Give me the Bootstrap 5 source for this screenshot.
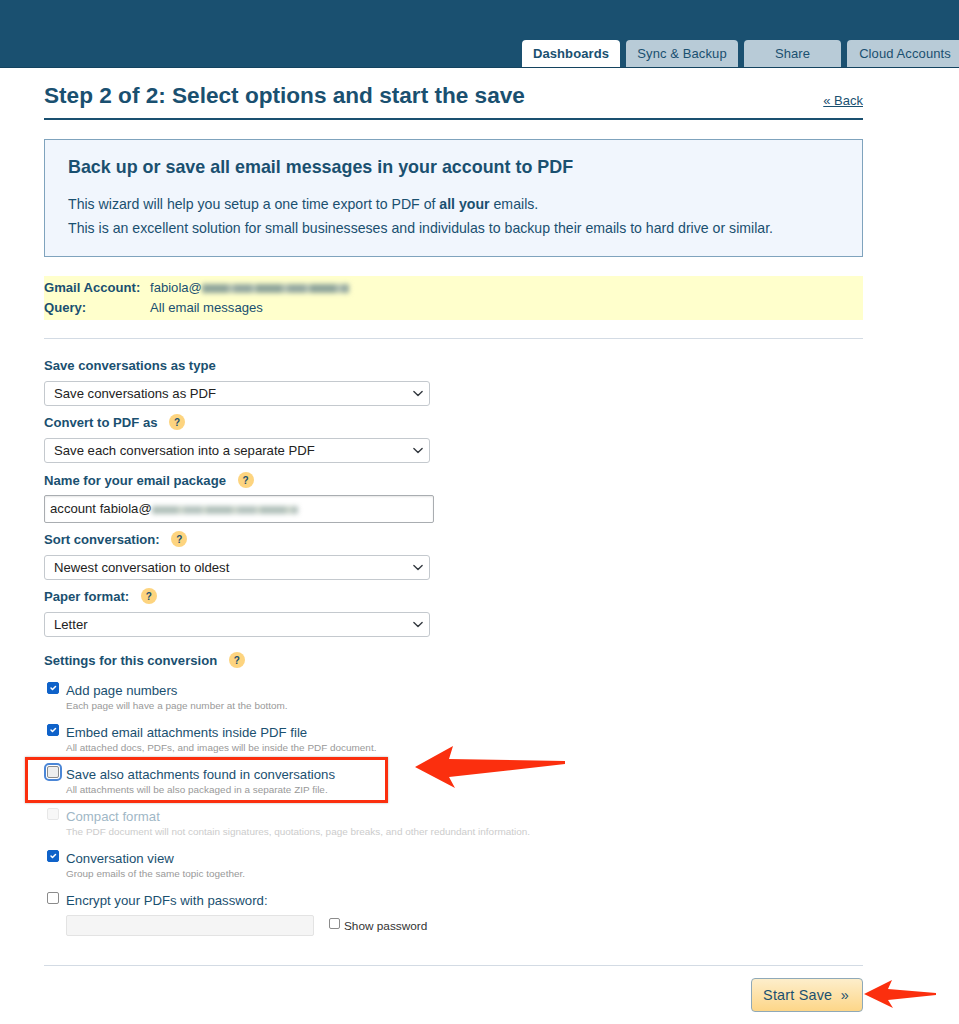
<!DOCTYPE html>
<html lang="en">
<head>
<meta charset="utf-8">
<title>Step 2 of 2</title>
<link href="https://cdn.jsdelivr.net/npm/bootstrap@5.3.0/dist/css/bootstrap.min.css" rel="stylesheet">
<style>
:root{--ink:#1a5070}
html,body{height:1024px;overflow:hidden}
body{position:relative;font-family:"Liberation Sans",Arial,sans-serif;font-size:13.1px;color:var(--ink);background:#fff;line-height:1.2}
.topband{height:68px;background:var(--ink);padding:40px 0 0 522px;gap:6px;overflow:hidden;border-bottom:1px solid #14435f}
.tabx{height:28px;background:#b8cbd7;border-radius:4px 4px 0 0;border-bottom:1px solid #8fabbd;font-size:13px;line-height:27px;text-align:center;color:var(--ink);flex:none;letter-spacing:.1px}
.tabx.on{background:#fff;border-bottom:0;font-weight:700;height:29px}
.pagewrap{width:819px;margin-left:44px}
.headrow{height:52px;border-bottom:2px solid var(--ink)}
.headrow h1{font-size:22.6px;font-weight:700;margin:0;padding-top:15px;color:var(--ink);line-height:26px}
.backlink{font-size:13px;color:var(--ink);padding-top:25px}
.introbox{margin-top:19px;height:118px;background:#f1f6fd;border:1px solid #7fa3bd;padding:16px 23px 0}
.introbox h2{font-size:17.9px;font-weight:700;margin:0 0 18px;line-height:22px;color:var(--ink)}
.introbox p{font-size:14.14px;margin:0 0 8px;line-height:16px}
.yellowbar{margin-top:19px;height:44px;background:#ffc;padding-top:4px}
.yellowbar .kvrow{height:20px;line-height:15px}
.yellowbar .keyb{width:106px;font-weight:700;flex:none}
.blurred{display:inline-block;height:9px;vertical-align:-1px;filter:blur(2.4px);background:repeating-linear-gradient(90deg,#8ea49b 0 26px,#b4c2b4 26px 32px,#94a8a1 32px 50px,#bcc9ba 50px 54px)}
.softrule{border:0;border-top:1px solid #d3dbe4;margin:0;opacity:1}
.fieldlab{font-weight:700;display:block;line-height:15px;margin:0}
.helpdot{display:inline-flex;width:16px;height:16px;border-radius:50%;background:#fdd47f;color:#1a5070;font-size:10px;font-weight:700;align-items:center;justify-content:center;margin-left:8px;vertical-align:1px}
.selx.form-select{width:386px;height:25px;padding:0 24px 0 9px;font-size:13.15px;line-height:23px;color:#222;border:1px solid #c4c9ce;border-radius:3px;background-position:right 4px center;background-size:14px 11px;margin-top:8px}
.inpx{width:390px;height:28px;margin-top:7px;border:1px solid #a9adb1;border-radius:2px;padding:0 5px;font-size:13.15px;line-height:26px;color:#222;box-shadow:inset 0 1px 2px rgba(0,0,0,.1)}
.chkrow{display:flex;height:42px}
.chkrow .form-check-input{width:12px;height:12px;margin:-1px 7px 0 3px;flex:none;border:1px solid #8b8b8b;border-radius:2px}
.chkrow .form-check-input:checked{background-color:#0f62c9;border-color:#0f62c9}
.chkrow .chkt{line-height:16px;font-size:13.2px;margin-top:0}
.chkrow .chks{font-size:9.95px;line-height:11px;margin-top:1px;color:#999}
.chkrow.faded .chkt{color:#9fb7c6}
.chkrow.faded .chks{color:#ccc}
.chkrow.faded .form-check-input{opacity:.45;background:#eee;border-color:#ccc}
.ringed{outline:2px solid #4b86d6;outline-offset:1px}
.ringed.form-check-input{width:12px;height:12px;background:#eee;}
.pwbox{width:248px;height:21px;margin-left:22px;background:#f5f5f5;border:1px solid #e3e3e3;border-radius:2px;flex:none}
.showpw{color:#333;font-size:11.8px;margin-left:15px;display:flex;align-items:flex-start;gap:4px;line-height:14px;padding-top:4px}
.showpw .form-check-input{width:11px;height:11px;margin:0;border:1px solid #8b8b8b;border-radius:2px;margin-top:-1px}
.startbtn.btn{width:112px;height:34px;padding:0 2px 0 0;border:1px solid #8fa9b8;border-radius:4px;background:linear-gradient(#fdeecb,#fdd688);color:var(--ink);font-size:14.4px;line-height:32px;--bs-btn-hover-color:#1a5070;letter-spacing:.2px}
.redbox{position:absolute;left:25px;top:757px;width:363px;height:46px;border:3px solid #fb2f0e;box-shadow:0 0 2px rgba(0,0,0,.3);pointer-events:none}
.arrowx{position:absolute;pointer-events:none}
</style>
</head>
<body>
<div class="topband d-flex">
  <div class="tabx on" style="width:98px">Dashboards</div>
  <div class="tabx" style="width:112px">Sync &amp; Backup</div>
  <div class="tabx" style="width:97px">Share</div>
  <div class="tabx" style="width:116px">Cloud Accounts</div>
</div>
<div class="pagewrap">
  <div class="headrow d-flex justify-content-between">
    <h1>Step 2 of 2: Select options and start the save</h1>
    <a class="backlink" href="#">« Back</a>
  </div>
  <div class="introbox">
    <h2>Back up or save all email messages in your account to PDF</h2>
    <p>This wizard will help you setup a one time export to PDF of <b>all your</b> emails.</p>
    <p>This is an excellent solution for small businesseses and individulas to backup their emails to hard drive or similar.</p>
  </div>
  <div class="yellowbar">
    <div class="kvrow d-flex"><span class="keyb">Gmail Account:</span><span>fabiola@<span class="blurred" style="width:147px"></span></span></div>
    <div class="kvrow d-flex"><span class="keyb">Query:</span><span>All email messages</span></div>
  </div>
  <hr class="softrule" style="margin-top:18px;margin-bottom:19px">
  <label class="fieldlab">Save conversations as type</label>
  <select class="form-select selx"><option>Save conversations as PDF</option></select>
  <label class="fieldlab" style="margin-top:8px">Convert to PDF as <span class="helpdot">?</span></label>
  <select class="form-select selx"><option>Save each conversation into a separate PDF</option></select>
  <label class="fieldlab" style="margin-top:9px">Name for your email package <span class="helpdot">?</span></label>
  <div class="inpx">account fabiola@<span class="blurred" style="width:146px;height:8px;opacity:.7"></span></div>
  <label class="fieldlab" style="margin-top:8px">Sort conversation: <span class="helpdot">?</span></label>
  <select class="form-select selx"><option>Newest conversation to oldest</option></select>
  <label class="fieldlab" style="margin-top:8px">Paper format: <span class="helpdot">?</span></label>
  <select class="form-select selx"><option>Letter</option></select>
  <label class="fieldlab" style="margin-top:15px;margin-bottom:15px">Settings for this conversion <span class="helpdot">?</span></label>

  <div class="chkrow"><input class="form-check-input" type="checkbox" checked><div><div class="chkt">Add page numbers</div><div class="chks">Each page will have a page number at the bottom.</div></div></div>
  <div class="chkrow"><input class="form-check-input" type="checkbox" checked><div><div class="chkt">Embed email attachments inside PDF file</div><div class="chks">All attached docs, PDFs, and images will be inside the PDF document.</div></div></div>
  <div class="chkrow"><input class="form-check-input ringed" type="checkbox"><div><div class="chkt">Save also attachments found in conversations</div><div class="chks">All attachments will be also packaged in a separate ZIP file.</div></div></div>
  <div class="chkrow faded"><input class="form-check-input" type="checkbox" disabled><div><div class="chkt">Compact format</div><div class="chks">The PDF document will not contain signatures, quotations, page breaks, and other redundant information.</div></div></div>
  <div class="chkrow"><input class="form-check-input" type="checkbox" checked><div><div class="chkt">Conversation view</div><div class="chks">Group emails of the same topic together.</div></div></div>
  <div class="chkrow" style="height:22px"><input class="form-check-input" type="checkbox"><div class="chkt">Encrypt your PDFs with password:</div></div>
  <div class="d-flex">
    <div class="pwbox"></div>
    <label class="showpw"><input class="form-check-input" type="checkbox"> Show password</label>
  </div>
  <hr class="softrule" style="margin-top:29px;margin-bottom:12px">
  <div class="d-flex justify-content-end"><button class="btn startbtn" type="button">Start Save &nbsp;»</button></div>
</div>

<div class="redbox"></div>
<svg class="arrowx" style="left:410px;top:740px" width="160" height="52" viewBox="0 0 160 52"><path d="M5 27 L43 6 L39 19 L155 21 L155 24 L39 37 L45 48 Z" fill="#fb2f0e"/></svg>
<svg class="arrowx" style="left:860px;top:975px" width="80" height="38" viewBox="0 0 80 38"><path d="M4 19 L32 5 L28 14 L76 18 L76 20 L28 25 L33 33 Z" fill="#fb2f0e"/></svg>
<script src="https://cdn.jsdelivr.net/npm/bootstrap@5.3.0/dist/js/bootstrap.bundle.min.js"></script>
</body>
</html>
